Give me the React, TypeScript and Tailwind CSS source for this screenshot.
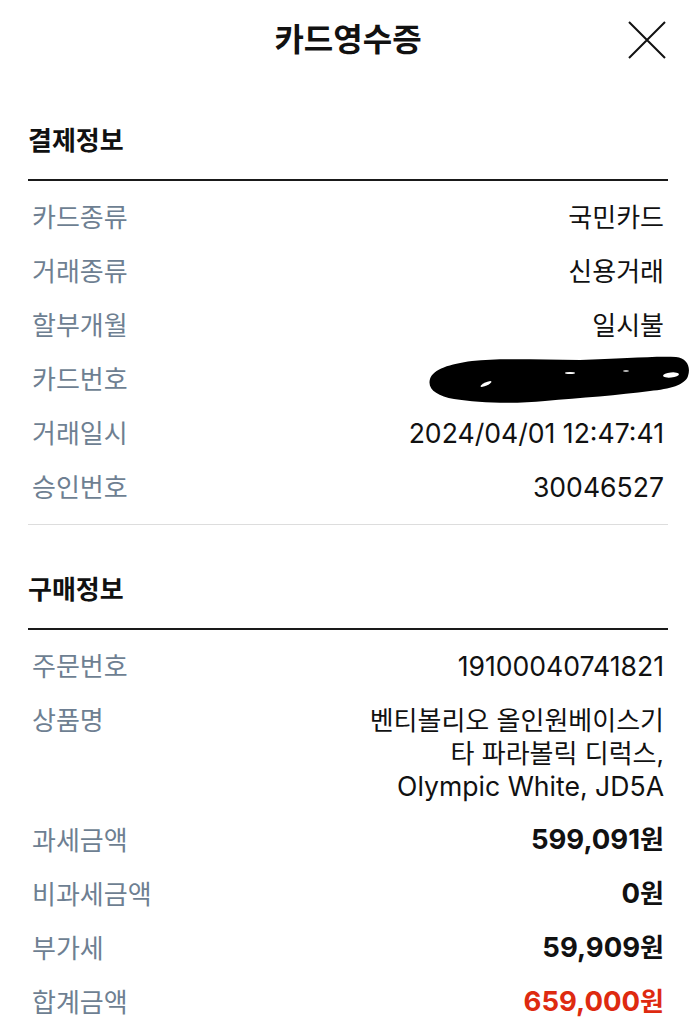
import React from 'react';

const FONT = 'font-["Inter","Noto_Sans_CJK_KR",sans-serif]';

interface RowProps {
  label: string;
  children: React.ReactNode;
}

function Row({ label, children }: RowProps) {
  return (
    <div className="flex items-start justify-between py-[10.5px] pl-[4px] pr-[4px] text-[26px] leading-[33px]">
      <span className="block shrink-0 text-[#6e7f92]">{label}</span>
      <div className="text-right text-[#111111]">{children}</div>
    </div>
  );
}

function SectionTitle({ title }: { title: string }) {
  return (
    <h2 className="border-b-2 border-[#1a1a1a] pb-[22.5px] text-[26px] font-bold leading-[33px] text-[#111111]">
      {title}
    </h2>
  );
}

function Num({ children }: { children: React.ReactNode }) {
  return <span className="block text-[26.6px] leading-[33px]">{children}</span>;
}

function Amount({ value, red }: { value: string; red?: boolean }) {
  return (
    <div
      className={`flex h-[33px] items-center justify-end font-bold ${red ? 'text-[#de2a10]' : 'text-[#111111]'}`}
    >
      <span className="flex items-baseline">
        <span className="text-[27.5px] leading-none">{value}</span>
        <span className="text-[26px] leading-none">원</span>
      </span>
    </div>
  );
}

export default function App() {
  return (
    <div className={`min-h-[1024px] w-full bg-white ${FONT}`}>
      <header className="grid h-[80px] grid-cols-[1fr_auto_1fr] items-center">
        <div />
        <h1 className="text-[32px] font-bold leading-[40px] text-[#111111]">카드영수증</h1>
        <div className="flex justify-end pr-[30px]">
          <button className="flex h-[38px] w-[38px] items-center justify-center">
            <svg width="38" height="38" viewBox="0 0 38 38" fill="none" stroke="#111111" strokeWidth="2">
              <path d="M1 1L37 37M37 1L1 37" />
            </svg>
          </button>
        </div>
      </header>

      <main className="px-[28px]">
        <section className="mt-[43.5px]">
          <SectionTitle title="결제정보" />
          <div className="border-b border-[#dddddd] pb-[9.5px] pt-[9px]">
            <Row label="카드종류">국민카드</Row>
            <Row label="거래종류">신용거래</Row>
            <Row label="할부개월">일시불</Row>
            <Row label="카드번호">
              {/* masked card number scribble */}
              <svg width="258" height="33" viewBox="0 0 258 33" overflow="visible" className="-mr-[24px] block">
                <path
                  d="M0 16 C3 6 20 1 42 -2 C72 -5 110 -3 150 -3 C190 -4 222 -7 246 -6 C257 -5 261 4 258 13 C255 22 240 26 220 28 C190 32 150 35 115 38 C85 41 48 40 24 36 C7 33 -3 26 0 16 Z"
                  fill="#000"
                />
                <ellipse cx="241" cy="12" rx="8" ry="2.5" fill="#fff" transform="rotate(-6 241 12)" />
                <ellipse cx="56" cy="21" rx="6" ry="1.6" fill="#fff" transform="rotate(-25 56 21)" />
                <ellipse cx="140" cy="10" rx="5" ry="1" fill="#fff" />
                <ellipse cx="196" cy="8" rx="3" ry="0.8" fill="#fff" />
              </svg>
            </Row>
            <Row label="거래일시">
              <Num>2024/04/01 12:47:41</Num>
            </Row>
            <Row label="승인번호">
              <Num>30046527</Num>
            </Row>
          </div>
        </section>

        <section className="mt-[48px]">
          <SectionTitle title="구매정보" />
          <div className="pt-[9px]">
            <Row label="주문번호">
              <Num>19100040741821</Num>
            </Row>
            <Row label="상품명">
              <div className="w-[300px]">
                <span className="block">벤티볼리오 올인원베이스기</span>
                <span className="block">타 파라볼릭 디럭스,</span>
                <Num>Olympic White, JD5A</Num>
              </div>
            </Row>
            <Row label="과세금액">
              <Amount value="599,091" />
            </Row>
            <Row label="비과세금액">
              <Amount value="0" />
            </Row>
            <Row label="부가세">
              <Amount value="59,909" />
            </Row>
            <Row label="합계금액">
              <Amount value="659,000" red />
            </Row>
          </div>
        </section>
      </main>
    </div>
  );
}
